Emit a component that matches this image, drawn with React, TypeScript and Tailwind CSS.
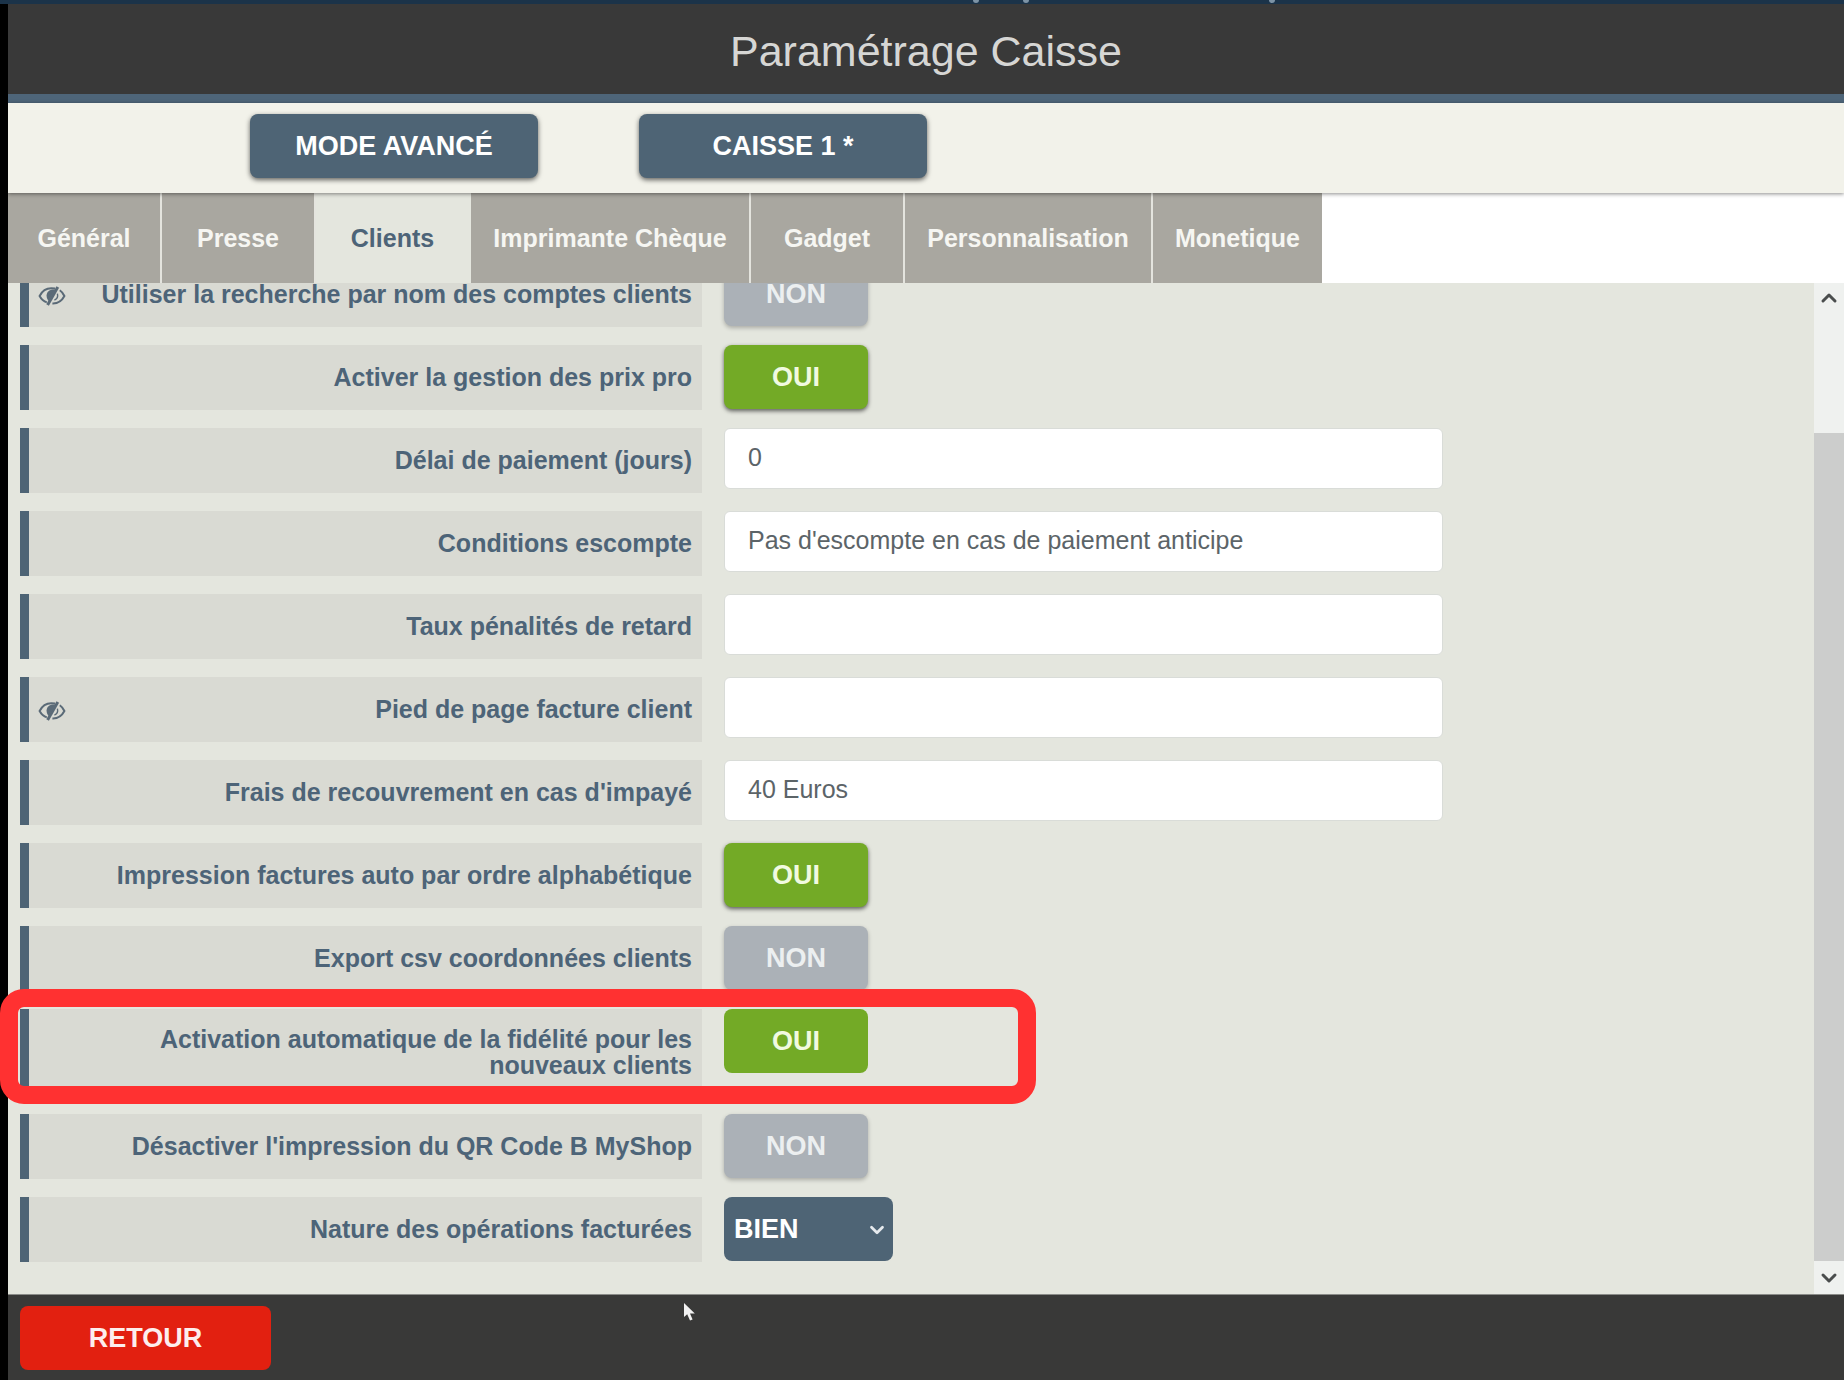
import React, { useState } from 'react';
import { ChevronDown, ChevronUp } from 'lucide-react';

type Setting = {
  id: string;
  label: string;
  kind: 'toggle' | 'text' | 'select';
  value: string;
  hidden?: boolean;
  highlighted?: boolean;
};

const tabs = [
  { name: 'Général', width: 'w-[154px]' },
  { name: 'Presse', width: 'w-[154px]' },
  { name: 'Clients', width: 'w-[155px]' },
  { name: 'Imprimante Chèque', width: 'w-[280px]' },
  { name: 'Gadget', width: 'w-[154px]' },
  { name: 'Personnalisation', width: 'w-[248px]' },
  { name: 'Monetique', width: 'w-[169px]' },
];

const settings: Setting[] = [
  { id: 'recherche', label: 'Utiliser la recherche par nom des comptes clients', kind: 'toggle', value: 'NON', hidden: true },
  { id: 'prix-pro', label: 'Activer la gestion des prix pro', kind: 'toggle', value: 'OUI' },
  { id: 'delai', label: 'Délai de paiement (jours)', kind: 'text', value: '0' },
  { id: 'escompte', label: 'Conditions escompte', kind: 'text', value: "Pas d'escompte en cas de paiement anticipe" },
  { id: 'penalites', label: 'Taux pénalités de retard', kind: 'text', value: '' },
  { id: 'pied-page', label: 'Pied de page facture client', kind: 'text', value: '', hidden: true },
  { id: 'frais', label: "Frais de recouvrement en cas d'impayé", kind: 'text', value: '40 Euros' },
  { id: 'impression', label: 'Impression factures auto par ordre alphabétique', kind: 'toggle', value: 'OUI' },
  { id: 'export', label: 'Export csv coordonnées clients', kind: 'toggle', value: 'NON' },
  { id: 'fidelite', label: 'Activation automatique de la fidélité pour les nouveaux clients', kind: 'toggle', value: 'OUI', highlighted: true },
  { id: 'qr-code', label: "Désactiver l'impression du QR Code B MyShop", kind: 'toggle', value: 'NON' },
  { id: 'nature', label: 'Nature des opérations facturées', kind: 'select', value: 'BIEN' },
];

const HiddenIcon = () => (
  <svg viewBox="0 0 28 22" className="absolute left-[9px] top-[23px] h-[22px] w-7" fill="none" stroke="#5a6a77" strokeWidth="2" aria-hidden="true">
    <path d="M17 3.6C8 1.8 3.6 7 1.6 11c1.6 3 4.2 5.4 7.2 6.4" />
    <path d="M21.8 5.2c2 1.4 3.6 3.4 4.6 5.8-2.6 5-7 7.6-12 7.4" />
    <path d="M19.8 2 9.6 20" strokeWidth="3" />
    <path d="M17.4 4.6c-5-1-8.8 1.6-8.8 6 0 2.4.8 4.2 2.2 5.4z" fill="#5a6a77" stroke="none" />
    <path d="M19.4 8.6c.8 3-.4 5.4-3 6.6" strokeWidth="1.4" />
  </svg>
);

const Toggle: React.FC<{ setting: Setting }> = ({ setting }) => {
  const [on, setOn] = useState(setting.value === 'OUI');
  return (
    <button
      id={setting.id}
      type="button"
      aria-pressed={on}
      onClick={() => setOn(!on)}
      className={`h-16 w-36 rounded-lg text-[27px] leading-8 font-bold ${
        on ? 'bg-[#73aa26] text-[#f1fae0]' : 'bg-[#abb1b7] text-[#eceff0]'
      } ${setting.highlighted ? '' : on ? 'shadow-[0_2px_4px_rgba(0,0,0,0.6)]' : 'shadow-[0_2px_4px_rgba(0,0,0,0.25)]'}`}
    >
      {on ? 'OUI' : 'NON'}
    </button>
  );
};

const Field: React.FC<{ setting: Setting }> = ({ setting }) => {
  if (setting.kind === 'toggle') return <Toggle setting={setting} />;

  if (setting.kind === 'select') {
    return (
      <div className="relative w-[169px]">
        <select
          id={setting.id}
          defaultValue={setting.value}
          className="h-16 w-full appearance-none rounded-lg bg-[#4e6475] pl-[10px] text-[27px] leading-8 font-bold text-white"
        >
          <option>BIEN</option>
          <option>SERVICE</option>
        </select>
        <ChevronDown size={22} strokeWidth={3} className="pointer-events-none absolute right-[5px] top-[22px] text-[#e6eaee]" />
      </div>
    );
  }

  return (
    <input
      id={setting.id}
      type="text"
      defaultValue={setting.value}
      className="h-[61px] w-[719px] rounded-md border border-[#d9dcd8] bg-white px-[23px] pb-[2px] text-[25px] text-[#5c6468]"
    />
  );
};

const SettingRow: React.FC<{ setting: Setting }> = ({ setting }) => (
  <div className="relative flex items-start gap-[22px]">
    <label
      htmlFor={setting.id}
      className="relative flex min-h-[65px] w-[682px] items-center justify-end border-l-[9px] border-[#4e6475] bg-[#d9dad3] pt-[17px] pr-[10px] pb-[18px] pl-16 text-right text-[25px] leading-[26px] font-bold text-[#4d6478]"
    >
      {setting.hidden && <HiddenIcon />}
      <span className={setting.highlighted ? 'max-w-[560px]' : 'whitespace-nowrap'}>{setting.label}</span>
    </label>
    <Field setting={setting} />
    {setting.highlighted && (
      <div className="pointer-events-none absolute -left-5 -top-5 h-[115px] w-[1036px] rounded-3xl border-[18px] border-[#ff3131]" />
    )}
  </div>
);

const ToolbarButton: React.FC<{ children: React.ReactNode }> = ({ children }) => (
  <button
    type="button"
    className="h-16 w-[288px] rounded-lg bg-[#4e6475] text-[27px] leading-8 font-bold text-white shadow-[0_2px_5px_rgba(0,0,0,0.6)]"
  >
    {children}
  </button>
);

export default function App() {
  const [activeTab, setActiveTab] = useState('Clients');

  return (
    <div className="flex h-screen flex-col bg-white pb-3 font-['Liberation_Sans',Arial,sans-serif]">
      {/* Bottom edge of the window title bar */}
      <div className="flex h-1 shrink-0 bg-[#1b3349] pl-[973px]" aria-hidden="true">
        <span className="h-[3px] w-[6px] rounded-b bg-[#7d93a5]" />
        <span className="ml-11 h-[3px] w-[6px] rounded-b bg-[#7d93a5]" />
        <span className="ml-60 h-[3px] w-[6px] rounded-b bg-[#7d93a5]" />
      </div>

      <div className="flex min-h-0 flex-1 flex-col bg-black pl-2">
        <header className="flex h-[99px] shrink-0 items-center justify-center border-b-[9px] border-[#4e6579] bg-[#393939]">
          <h1 className="pt-1 text-[43px] leading-[48px] text-[#d6d6d4]">Paramétrage Caisse</h1>
        </header>

        <div className="relative flex h-[90px] shrink-0 items-start gap-[101px] bg-[#f2f2ea] pt-[11px] pl-[242px] shadow-[0_1px_4px_rgba(0,0,0,0.45)]">
          <ToolbarButton>MODE AVANCÉ</ToolbarButton>
          <ToolbarButton>CAISSE 1 *</ToolbarButton>
        </div>

        <nav className="flex h-[90px] shrink-0 bg-white" role="tablist">
          {tabs.map((tab) => (
            <button
              key={tab.name}
              type="button"
              role="tab"
              aria-selected={tab.name === activeTab}
              onClick={() => setActiveTab(tab.name)}
              className={`${tab.width} border-r-2 text-[25px] leading-8 font-bold last:border-r-0 ${
                tab.name === activeTab
                  ? 'border-[#e4e6de] bg-[#e4e6de] text-[#4d6478]'
                  : 'border-[#e4e4de] bg-[#a9a7a0] text-[#f6f6f2]'
              }`}
            >
              {tab.name}
            </button>
          ))}
        </nav>

        <main className="flex min-h-0 flex-1 bg-[#e4e6de]">
          <div className="flex min-w-0 flex-1 flex-col justify-end gap-[18px] overflow-y-clip pb-8 pl-3">
            {settings.map((setting) => (
              <SettingRow key={setting.id} setting={setting} />
            ))}
          </div>

          {/* Scrollbar */}
          <div className="flex w-[30px] flex-col bg-[#eff1ef] text-[#4a4d4d]">
            <button type="button" aria-label="Défiler vers le haut" className="flex h-[30px] items-center justify-center">
              <ChevronUp size={24} strokeWidth={3} />
            </button>
            <div className="mt-[120px] flex-1 bg-[#cccdcc]" />
            <button type="button" aria-label="Défiler vers le bas" className="flex h-[33px] items-center justify-center">
              <ChevronDown size={24} strokeWidth={3} />
            </button>
          </div>
        </main>

        <footer className="relative flex h-[86px] shrink-0 items-center border-t border-[#8a8b88] bg-[#393938] pl-3">
          <button type="button" className="h-16 w-[251px] rounded-lg bg-[#e22010] text-[27px] leading-8 font-bold text-[#fdeeee]">
            RETOUR
          </button>
          <svg viewBox="0 0 11 18" className="absolute left-[676px] top-2 h-[18px] w-[11px]" fill="#f2f2f2" aria-hidden="true">
            <path d="M0 0v14l3.2-2.8L6 17.6l2.6-1.2L6 10.4h4.8z" />
          </svg>
        </footer>
      </div>
    </div>
  );
}
